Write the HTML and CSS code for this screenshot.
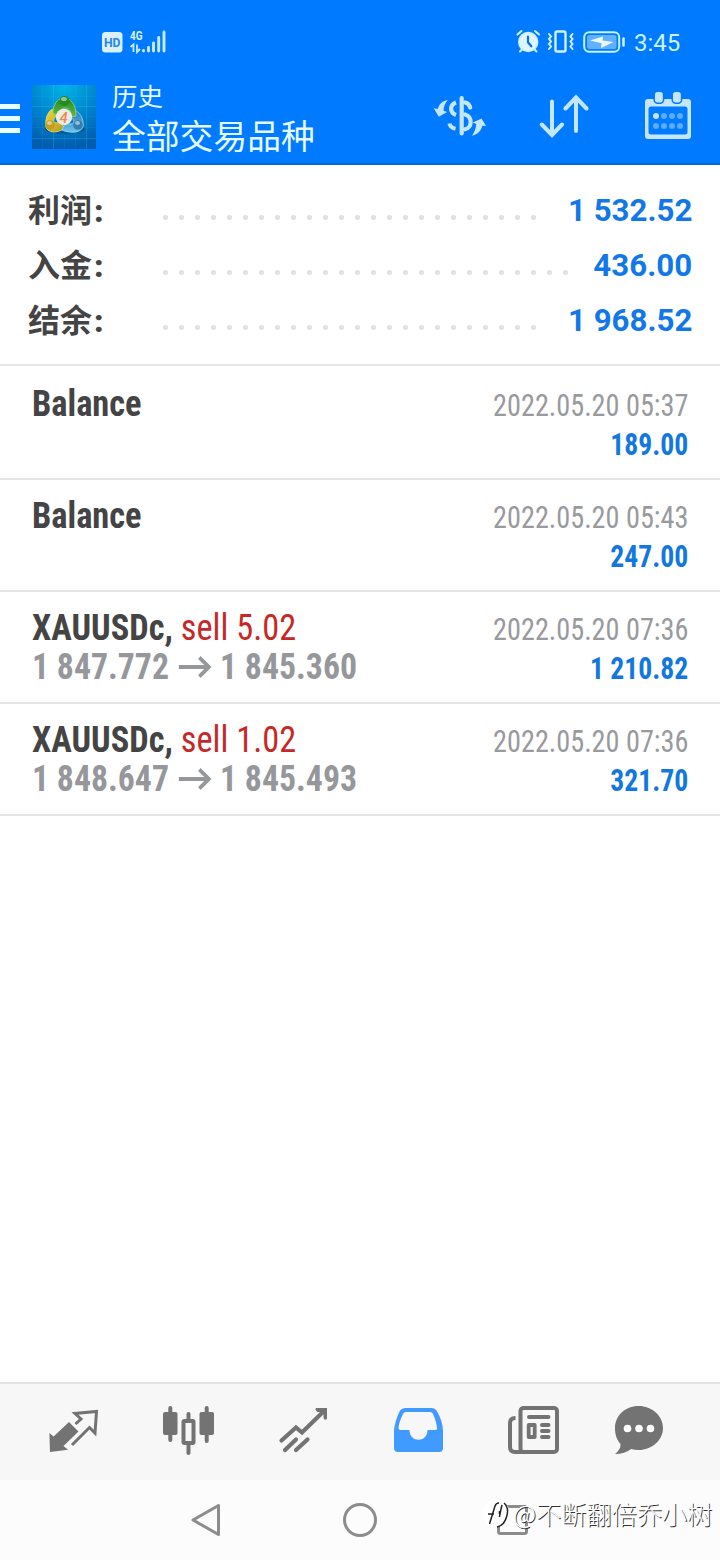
FILE: index.html
```html
<!DOCTYPE html>
<html lang="zh-CN">
<head>
<meta charset="utf-8">
<title>历史</title>
<link rel="stylesheet" href="styles.css">
</head>
<body>
<div class="app">
  <div class="status">
    <svg class="status-left" width="68" height="28" viewBox="100 28 68 28">
      <rect x="102" y="32" width="20.500" height="20.500" rx="3.500" fill="#d9f0ff"/>
      <text class="hd" x="104" y="47" textLength="16.500" lengthAdjust="spacingAndGlyphs">HD</text>
      <text class="net" x="130" y="40" textLength="12.500" lengthAdjust="spacingAndGlyphs">4G</text>
      <g stroke="#c8ecff" fill="none" stroke-width="2.900" stroke-linecap="round"><path d="M143.500 50.500v.5M148.500 47.500v3.500M153.500 43v8M158.700 37.500V51M164 32V51"/><path d="M130.500 47l3-2.500V52M137 44.500V52l3-3" stroke-width="1.800" stroke-linecap="butt"/></g>
    </svg>
    <svg class="status-icons" width="112" height="28" viewBox="515 28 112 28">
      <g fill="none" stroke="#d0f2ff" stroke-width="2" stroke-linecap="round">
        <path d="M517.500 34.500l4-3.500M539 34.500l-4-3.500M520 51.500l2-2M536.500 51.500l-2-2"/>
        <circle cx="528.200" cy="42" r="9.200" fill="#dff6ff"/>
        <path d="M528 36.500v5.800l3.300 4" stroke="#0870e8" stroke-width="2.200"/>
        <rect x="555.500" y="31.500" width="10" height="20" rx="1.500" stroke-width="2.400"/>
        <path d="M549 34l2 2.500-2 2.500 2 2.500-2 2.500 2 2.500-2 2.500M572.500 34l-2 2.500 2 2.500-2 2.500 2 2.500-2 2.500 2 2.500" stroke-width="2"/>
        <rect x="584.200" y="32.200" width="35" height="19.600" rx="5" stroke="#c4f5ff"/>
        <rect x="587" y="35" width="29.500" height="14" rx="2.500" fill="#60b1ff" stroke="none"/>
        <path d="M590 40.500l13-4-.5 4 11 1.500-12.500 6 .5-4.800z" fill="#eafaff" stroke="none"/>
        <path d="M623.500 38.500v7" stroke-width="2.500"/>
      </g>
    </svg>
    <span class="clock">3:45</span>
  </div>

  <header class="header">
    <svg class="burger" width="20" height="31" viewBox="0 0 20 31"><path d="M0 2.500H20M0 14.500H20M0 26.500H20" stroke="#e9fdff" stroke-width="5"/></svg>
    <svg class="logo" width="64" height="64" viewBox="0 0 64 64">
      <defs>
        <radialGradient id="sky" cx=".5" cy="0" r="1"><stop offset="0" stop-color="#00b5e8"/><stop offset=".5" stop-color="#0087d0"/><stop offset="1" stop-color="#005cac"/></radialGradient>
        <linearGradient id="green" x2="0" y2="1"><stop stop-color="#238923"/><stop offset="1" stop-color="#62bd49"/></linearGradient>
        <linearGradient id="gold" x2="1" y2="1"><stop stop-color="#e6dc3c"/><stop offset="1" stop-color="#b69518"/></linearGradient>
        <linearGradient id="azure" x2="0" y2="1"><stop stop-color="#2477ba"/><stop offset="1" stop-color="#6bc3ed"/></linearGradient>
      </defs>
      <rect width="64" height="64" fill="url(#sky)"/>
      <path d="M21.500 0V64M54.500 0V64M0 21.500H64M0 53.500H64" stroke="#5cc9f0" stroke-opacity=".22" fill="none"/>
      <path d="M10.500 0V64M32.500 0V64M43.500 0V64M0 11.500H64M0 31.500H64M0 42.500H64" stroke="#5cc9f0" stroke-opacity=".08" fill="none"/>
      <ellipse cx="33" cy="44" rx="20" ry="5" fill="#004984" opacity=".6"/>
      <path d="M21 24c-7 2-9 17-6 20 4 5 13 3 18-1l-6-6c-4 2-6 0-5-3 1-3 4-3 5-5z" fill="url(#gold)" stroke="#eae678" stroke-width=".8"/>
      <path d="M42 25c8 3 10 12 9 17-3 7-15 6-21 3l3-7c5 2 9 1 9-2 0-2-3-3-5-4z" fill="url(#azure)" stroke="#9ddbf0" stroke-width=".8"/>
      <path d="M21 28c0-7 3-12 7-14h9c5 4 7 9 7 17l-5 1c0-7-3-9-6-9s-5 2-7 8z" fill="url(#green)" stroke="#a3d66b" stroke-width=".8"/>
      <circle cx="32.500" cy="16" r="5" fill="#248a26"/><circle cx="18" cy="40" r="4.800" fill="#c19d21"/><circle cx="46" cy="40" r="4.800" fill="#367eaf"/>
      <g fill="#fff" opacity=".5"><ellipse cx="32" cy="14" rx="3" ry="2"/><ellipse cx="17.500" cy="38" rx="2.500" ry="2"/><ellipse cx="45.500" cy="38" rx="2.500" ry="2"/></g>
      <circle cx="32" cy="32" r="8.200" fill="#eeeae4"/>
      <text class="logo-four" x="27.500" y="37.500">4</text>
    </svg>
    <div class="titles"><div class="sub">历史</div><div class="title">全部交易品种</div></div>
    <svg class="act-money" width="56" height="50" viewBox="432 92 56 50">
      <g fill="none" stroke="#c5e6ff" stroke-width="4.200" stroke-linecap="round">
        <path d="M461.700 98v35.500"/>
        <path d="M465 102.500c3 .6 4.600 2.300 5.200 5M465 114.500c8 2.500 7 13.500 0 14.800"/>
        <path d="M456 102.500c-6.500 2.500-6.500 10 0 12.500M449.500 123.500c.5 3 2.500 4.600 6 5.300" stroke-linecap="butt"/>
      </g>
      <path d="M448 100c-5 .5-9 4-10.200 9l-4-.8 5 8.500 8.300-4.700-3.500-1.200c0-4 1.500-8 4.400-10.800zM472 135.700c5-.8 9.200-4.800 10.300-10l3.800.2-4.600-7.500-8.700 4 3.500 1.700c-.4 4-1.600 8-4.300 11.600z" fill="#c5e6ff"/>
    </svg>
    <svg class="act-sort" width="50" height="46" viewBox="539 94 50 46"><path d="M552 101.500V134M541.800 124.500L552 135 562 124.500M576 131V98M565.500 108.500L576 97.500 586.500 108.500" fill="none" stroke="#c5e6ff" stroke-width="4" stroke-linecap="round"/></svg>
    <svg class="act-cal" width="48" height="50" viewBox="644 90 48 50">
      <path fill-rule="evenodd" d="M648 99H688a3 3 0 0 1 3 3V136a3 3 0 0 1-3 3H648a3 3 0 0 1-3-3V102a3 3 0 0 1 3-3zM651 106.500a2.500 2.500 0 0 0-2.500 2.500V132a2.500 2.500 0 0 0 2.500 2.500H685a2.500 2.500 0 0 0 2.500-2.500V109a2.500 2.500 0 0 0-2.500-2.500z" fill="#c5e6ff"/>
      <g fill="#c5e6ff" stroke="#007aff" stroke-width="1.500"><rect x="654.200" y="91.300" width="9.400" height="12" rx="3.500"/><rect x="672.200" y="91.300" width="9.400" height="12" rx="3.500"/></g>
      <g fill="#5aacff"><circle cx="656" cy="116" r="3" fill="#c5e6ff"/><circle cx="664" cy="116" r="3"/><circle cx="672" cy="116" r="3"/><circle cx="680" cy="116" r="3"/><circle cx="656" cy="126" r="3"/><circle cx="664" cy="126" r="3"/><circle cx="672" cy="126" r="3"/><circle cx="680" cy="126" r="3"/></g>
    </svg>
  </header>

  <main class="content">
    <section class="summary">
      <div class="sum-row"><span class="label">利润<b class="colon">:</b></span><i class="dots"></i><span class="sum">1 532.52</span></div>
      <div class="sum-row"><span class="label">入金<b class="colon">:</b></span><i class="dots long"></i><span class="sum">436.00</span></div>
      <div class="sum-row"><span class="label">结余<b class="colon">:</b></span><i class="dots"></i><span class="sum">1 968.52</span></div>
    </section>
    <section class="deals">
      <article class="deal">
        <div class="left"><div class="name cond">Balance</div></div>
        <div class="right"><div class="time cond">2022.05.20 05:37</div><div class="amount cond">189.00</div></div>
      </article>
      <article class="deal">
        <div class="left"><div class="name cond">Balance</div></div>
        <div class="right"><div class="time cond">2022.05.20 05:43</div><div class="amount cond">247.00</div></div>
      </article>
      <article class="deal">
        <div class="left"><div class="name cond">XAUUSDc, <span class="sell">sell 5.02</span></div>
          <div class="prices cond"><span>1 847.772</span><svg width="37" height="24" viewBox="0 0 37 24"><path d="M1 12H34M23.500 2.500L34 12 23.500 21.500" fill="none" stroke="#95979b" stroke-width="4"/></svg><span>1 845.360</span></div></div>
        <div class="right"><div class="time cond">2022.05.20 07:36</div><div class="amount cond">1 210.82</div></div>
      </article>
      <article class="deal">
        <div class="left"><div class="name cond">XAUUSDc, <span class="sell">sell 1.02</span></div>
          <div class="prices cond"><span>1 848.647</span><svg width="37" height="24" viewBox="0 0 37 24"><path d="M1 12H34M23.500 2.500L34 12 23.500 21.500" fill="none" stroke="#95979b" stroke-width="4"/></svg><span>1 845.493</span></div></div>
        <div class="right"><div class="time cond">2022.05.20 07:36</div><div class="amount cond">321.70</div></div>
      </article>
    </section>
  </main>

  <nav class="tabs">
    <svg width="52" height="50" viewBox="48 1405 52 50"><path d="M69 1422l9.500 9.500-15 14.500 4.500 3.800-18 2.200-.6-19 4.200 3.500z" fill="#737373"/><path d="M75.500 1424l5.500-5-6-5.500 21.500-2-1.500 21.500-5.500-5.500-17.500 17.500" fill="none" stroke="#737373" stroke-width="3"/></svg>
    <svg width="52" height="50" viewBox="162 1405 52 50"><g fill="#737373"><rect x="163" y="1412" width="14.500" height="23" rx="2"/><rect x="199.500" y="1412" width="14.500" height="23" rx="2"/></g><rect x="183.500" y="1421" width="10" height="22" rx="1" fill="none" stroke="#737373" stroke-width="4"/><path d="M170.300 1408v32M206.700 1408v33M188.500 1414v6M188.500 1445v8" stroke="#737373" stroke-width="4" stroke-linecap="round"/></svg>
    <svg width="52" height="50" viewBox="277 1405 52 50"><path d="M281.500 1440.500L296 1427.500 302 1432.500 324 1411M285 1450L296 1439.500M296 1450L307.500 1439.500" fill="none" stroke="#737373" stroke-width="4.200" stroke-linecap="round"/><path d="M316 1408h11v11q-3.500 2-3.500-2v-5l-6 0q-3-2-1.500-4z" fill="#737373"/></svg>
    <svg width="52" height="50" viewBox="392 1405 52 50"><path fill-rule="evenodd" d="M405 1408H432q3 0 4.500 2.500 6 10 6.500 20V1448q0 4-4 4H398q-4 0-4-4V1430.500q1-10 6-20Q402 1408 405 1408zM406 1412q-2 0-3 2-4 8-4.500 14 0 2 2 2h9c0 13 18 13 18 0h8q2 0 1.500-2-.5-6-4-14-1-2-3-2z" fill="#419aff"/></svg>
    <svg width="52" height="50" viewBox="507 1405 52 50"><g fill="none" stroke="#737373" stroke-width="4"><rect x="520.500" y="1408" width="36.500" height="44" rx="3"/><path d="M515.500 1418q-5.500 0-5.500 5v24q0 5 5 5h10"/><path d="M529 1417h19.500M542 1425h6.500M542 1431h6.500M542 1437h6.500" stroke-linecap="round"/><rect x="528.700" y="1425" width="6" height="12" stroke-width="3.800" stroke-linejoin="round"/></g></svg>
    <svg width="52" height="50" viewBox="613 1405 52 50"><path d="M638.500 1406c13.500 0 24.500 10 24.500 22s-11 22-24.500 22q-4 0-7.500-1-6 5-16 5 6-5 5.500-10c-3.500-4-5.500-9-5.500-16 0-12 10-22 23.500-22z" fill="#737373"/><g fill="#fff"><circle cx="627.500" cy="1428.500" r="3.800"/><circle cx="639" cy="1428.500" r="3.800"/><circle cx="650.500" cy="1428.500" r="3.800"/></g></svg>
  </nav>

  <footer class="sysnav">
    <svg width="36" height="36" viewBox="188 1502 36 36"><path d="M218.500 1505.500v29L193 1520z" fill="none" stroke="#8c8c8c" stroke-width="3" stroke-linejoin="round"/></svg>
    <svg width="36" height="36" viewBox="342 1502 36 36"><circle cx="360" cy="1520" r="15.500" fill="none" stroke="#8c8c8c" stroke-width="3"/></svg>
    <svg width="36" height="36" viewBox="494 1502 36 36"><rect x="498.500" y="1506.500" width="28" height="27" rx="2" fill="none" stroke="#8c8c8c" stroke-width="3"/></svg>
    <div class="watermark">
      <svg width="31" height="32" viewBox="482 1500 31 32"><circle cx="496" cy="1516" r="13.500" fill="#fff"/><path d="M504 1506q5.500 5 2.500 14-2.500 8.500-9.500 10M489.500 1527l5.500-18q1-3 4-3M488 1517h6M499.500 1514v3M502 1508q-2 8-2.500 12" fill="none" stroke="#222" stroke-width="1.500"/></svg><span>@不断翻倍乔小树</span>
    </div>
  </footer>
</div>
</body>
</html>
```
FILE: styles.css
```css
* { box-sizing: border-box; }
body { margin: 0; background: #fff; font-family: Roboto, "Noto Sans CJK SC", sans-serif; }
svg { display: block; flex: none; }
.app { width: 720px; height: 1560px; display: flex; flex-direction: column; overflow: hidden; }

.status { height: 80px; background: #007aff; display: flex; align-items: flex-start; padding: 28px 0 0 100px; }
.status-icons { margin-left: 347px; }
.clock { margin-left: 7px; font-size: 24px; line-height: 30px; color: #c8f3ff; }
.hd { font: 700 13.500px Roboto, sans-serif; fill: #2388e5; }
.net { font: 700 12px Roboto, sans-serif; fill: #d9f3ff; }

.header { height: 85px; background: #007aff; border-bottom: 2px solid #0869ce; display: flex; align-items: flex-start; }
.burger { margin-top: 24px; }
.logo { margin: 5px 0 0 12px; }
.logo-four { font: italic 500 15px Roboto, sans-serif; fill: #e78e4b; }
.titles { margin-left: 16px; width: 306px; padding-top: 2px; color: #e4fbff; white-space: nowrap; }
.sub { font-size: 25.500px; line-height: 30px; }
.title { font-size: 33.800px; line-height: 44px; margin-top: 4px; }
.act-money { margin: 12px 0 0 14px; }
.act-sort { margin: 14px 0 0 51px; }
.act-cal { margin: 10px 0 0 55px; }

.content { flex: 1; background: #fff; }
.summary { height: 201px; padding: 18px 28px 0 28px; border-bottom: 2px solid #e5e5e5; }
.sum-row { height: 55px; display: flex; }
.label { width: 134px; padding-top: 1px; font-size: 32px; font-weight: 700; line-height: 55px; color: #444; white-space: nowrap; }
.colon { margin-left: 2px; }
.dots { width: 376px; height: 5px; margin-top: 32px; background: radial-gradient(circle at 3.500px 2.500px, #e3e3e3 2.300px, transparent 2.900px) 0 0 / 16px 5px repeat-x; }
.dots.long { width: 408px; }
.sum { margin-left: auto; font-size: 32px; font-weight: 700; line-height: 55px; color: #1278e8; white-space: nowrap; transform: scaleX(.977); transform-origin: right; }

.deal { height: 112px; border-bottom: 2px solid #e5e5e5; display: flex; justify-content: space-between; padding: 16px 32px 0; }
.deal:first-child { height: 114px; padding-top: 18px; }
.cond { font-family: "Roboto Condensed", Roboto, sans-serif; font-stretch: 75%; white-space: nowrap; transform-origin: left; }
.name { font-size: 37px; line-height: 39px; font-weight: 700; color: #444; transform: scaleX(.929); }
.sell { font-weight: 400; color: #c62828; }
.prices { display: flex; align-items: center; height: 39px; font-size: 37px; font-weight: 700; color: #95979b; transform: scaleX(.912); }
.prices svg { margin: 0 9px 0 10px; }
.right { text-align: right; }
.right .cond { transform-origin: right; }
.time { font-size: 31px; line-height: 39px; color: #999a9e; margin-top: 2px; transform: scaleX(.911); }
.amount { font-size: 31px; line-height: 39px; font-weight: 700; color: #1278df; transform: scaleX(.893); }

.tabs { height: 98px; background: #f7f7f7; border-top: 2px solid #e3e3e3; display: flex; align-items: flex-start; gap: 63px; padding: 21px 0 0 48px; }
.tabs svg:nth-child(2) { margin-left: -1px; }
.tabs svg:last-child { margin-left: -9px; }

.sysnav { position: relative; height: 80px; background: #fcfcfc; display: flex; align-items: flex-start; padding: 22px 0 0 188px; }
.sysnav > svg + svg { margin-left: 118px; }
.sysnav > svg:nth-child(3) { margin-left: 116px; }
.watermark { position: absolute; left: 482px; top: 14px; display: flex; align-items: center; color: #fff; font: 300 25.200px/38px "Noto Sans CJK SC", sans-serif; text-shadow: 1px 1px 0 #333; white-space: nowrap; }
```
